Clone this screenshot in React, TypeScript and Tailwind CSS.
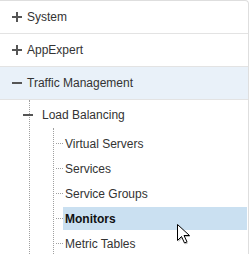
import React from "react";

type Leaf = { label: string; selected?: boolean };

const leaves: Leaf[] = [
  { label: "Virtual Servers" },
  { label: "Services" },
  { label: "Service Groups" },
  { label: "Monitors", selected: true },
  { label: "Metric Tables" },
];

function Plus() {
  return (
    <svg width="10" height="10" viewBox="0 0 10 10" className="shrink-0">
      <path d="M0 5h10M5 0v10" stroke="#555" strokeWidth="2" />
    </svg>
  );
}

function Minus() {
  return (
    <svg width="10" height="10" viewBox="0 0 10 10" className="shrink-0">
      <path d="M0 5h10" stroke="#555" strokeWidth="2" />
    </svg>
  );
}

function Cursor() {
  return (
    <svg width="14" height="22" viewBox="0 0 14 22" className="absolute left-[176px] top-[223px]">
      <path d="M1.5 1.5v16l4-4 3 6.5 2.5-1.2-3-6.3h5.5z" fill="#000" opacity="0.25" transform="translate(1 1.5)" />
      <path d="M1.5 1.5v16l4-4 3 6.5 2.5-1.2-3-6.3h5.5z" fill="#fff" stroke="#000" strokeWidth="1" strokeLinejoin="miter" />
    </svg>
  );
}

export default function App() {
  return (
    <div className="relative w-[250px] h-[254px] overflow-hidden bg-white font-['Liberation_Sans',Arial,sans-serif] text-[12px] text-[#333]">
      <div className="w-[249px] h-[254px] border-t border-r border-[#dedede] rounded-tr-[4px]">
        <div className="flex items-center h-[33px] pl-[12px] gap-[5px] border-b border-[#e3e3e3]">
          <Plus />
          <span>System</span>
        </div>
        <div className="flex items-center h-[33px] pl-[12px] gap-[5px] border-b border-[#e3e3e3]">
          <Plus />
          <span>AppExpert</span>
        </div>
        <div className="flex items-center h-[33px] pl-[12px] gap-[5px] border-b border-[#e3e3e3] bg-[#e9f1f9]">
          <Minus />
          <span>Traffic Management</span>
        </div>

        <div className="relative pl-[23px]">
          <span className="absolute left-[29px] top-0 h-[160px] border-l border-dotted border-[#a0a0a0]" />
          <div className="relative flex items-center h-[28px] gap-[9px] pt-[2px]">
            <Minus />
            <span>Load Balancing</span>
          </div>
          <div className="ml-[30px] pt-[3px] border-l border-dotted border-[#a0a0a0]">
            {leaves.map((leaf) => (
              <div key={leaf.label} className="flex items-center h-[25px]">
                <span className="w-[7px] ml-[2px] border-t border-dotted border-[#a0a0a0]" />
                <div
                  className={
                    leaf.selected
                      ? "flex items-center flex-1 h-[23px] mr-[1px] pl-[2px] bg-[#cae0f1] font-bold text-[#111]"
                      : "flex items-center flex-1 h-[23px] mr-[1px] pl-[2px]"
                  }
                >
                  {leaf.label}
                </div>
              </div>
            ))}
          </div>
        </div>
      </div>
      <Cursor />
    </div>
  );
}
